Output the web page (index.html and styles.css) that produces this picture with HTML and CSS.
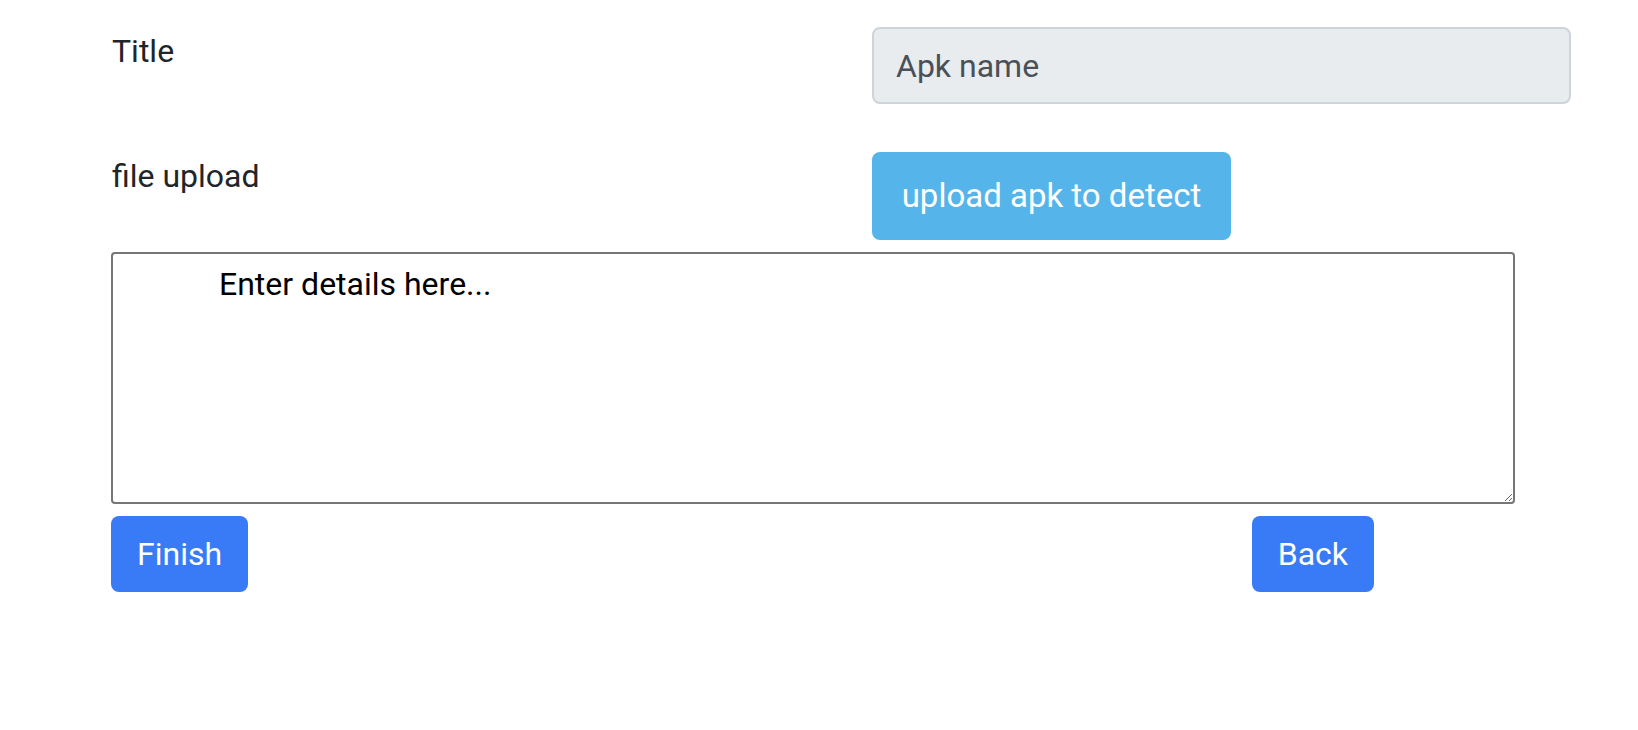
FILE: index.html
```html
<!DOCTYPE html>
<html lang="en">
<head>
<meta charset="utf-8">
<title>Upload APK</title>
<link rel="stylesheet" href="styles.css">
</head>
<body>
<main class="page">
  <form class="form">
    <div class="row row-title">
      <label class="label" for="apk-name">Title</label>
      <input id="apk-name" class="input" type="text" value="Apk name" readonly>
    </div>
    <div class="row row-upload">
      <label class="label">file upload</label>
      <div><button type="button" class="btn btn-info">upload apk to detect</button></div>
    </div>
    <textarea class="details">Enter details here...</textarea>
    <div class="actions">
      <button type="button" class="btn btn-primary">Finish</button>
      <button type="button" class="btn btn-primary">Back</button>
    </div>
  </form>
</main>
</body>
</html>
```
FILE: styles.css
```css
* { box-sizing: border-box; }
html, body { margin: 0; padding: 0; background: #fff; }
body {
  font-family: Roboto, "Liberation Sans", Arial, sans-serif;
  font-size: 32px;
  line-height: 48px;
  color: #212529;
}
.page {
  padding: 27px 0 0 111px;
}
.form { width: 1460px; }
.row {
  display: grid;
  grid-template-columns: 731px 699px;
  column-gap: 30px;
  align-items: start;
}
.row-upload { margin-top: 48px; }
.label {
  display: block;
  padding-left: 1px;
  line-height: 48px;
}
.input {
  display: block;
  width: 699px;
  height: 77px;
  padding: 0 22px;
  font: inherit;
  font-size: 32px;
  line-height: 48px;
  color: #495057;
  background: #e9ecef;
  border: 2px solid #ced4da;
  border-radius: 8px;
  outline: none;
}
.btn {
  display: inline-block;
  font: inherit;
  font-size: 32px;
  line-height: 48px;
  color: #fff;
  border: 0;
  border-radius: 8px;
  white-space: nowrap;
  cursor: pointer;
}
.btn-info {
  background: #55b4e9;
  padding: 20px 0;
  width: 359px;
  text-align: center;
  font-size: 33px;
}
.btn-primary {
  background: #397bf6;
  padding: 14px 26px;
  height: 76px;
}
.details {
  display: block;
  margin-top: 12px;
  width: 1404px;
  height: 252px;
  padding: 6px 4px;
  text-indent: 102px;
  font: inherit;
  font-size: 32px;
  line-height: 48px;
  color: #000;
  background: #fff;
  border: 2px solid #767676;
  border-radius: 4px;
  resize: both;
}
.actions {
  display: flex;
  justify-content: space-between;
  width: 1263px;
  margin-top: 12px;
}
```
